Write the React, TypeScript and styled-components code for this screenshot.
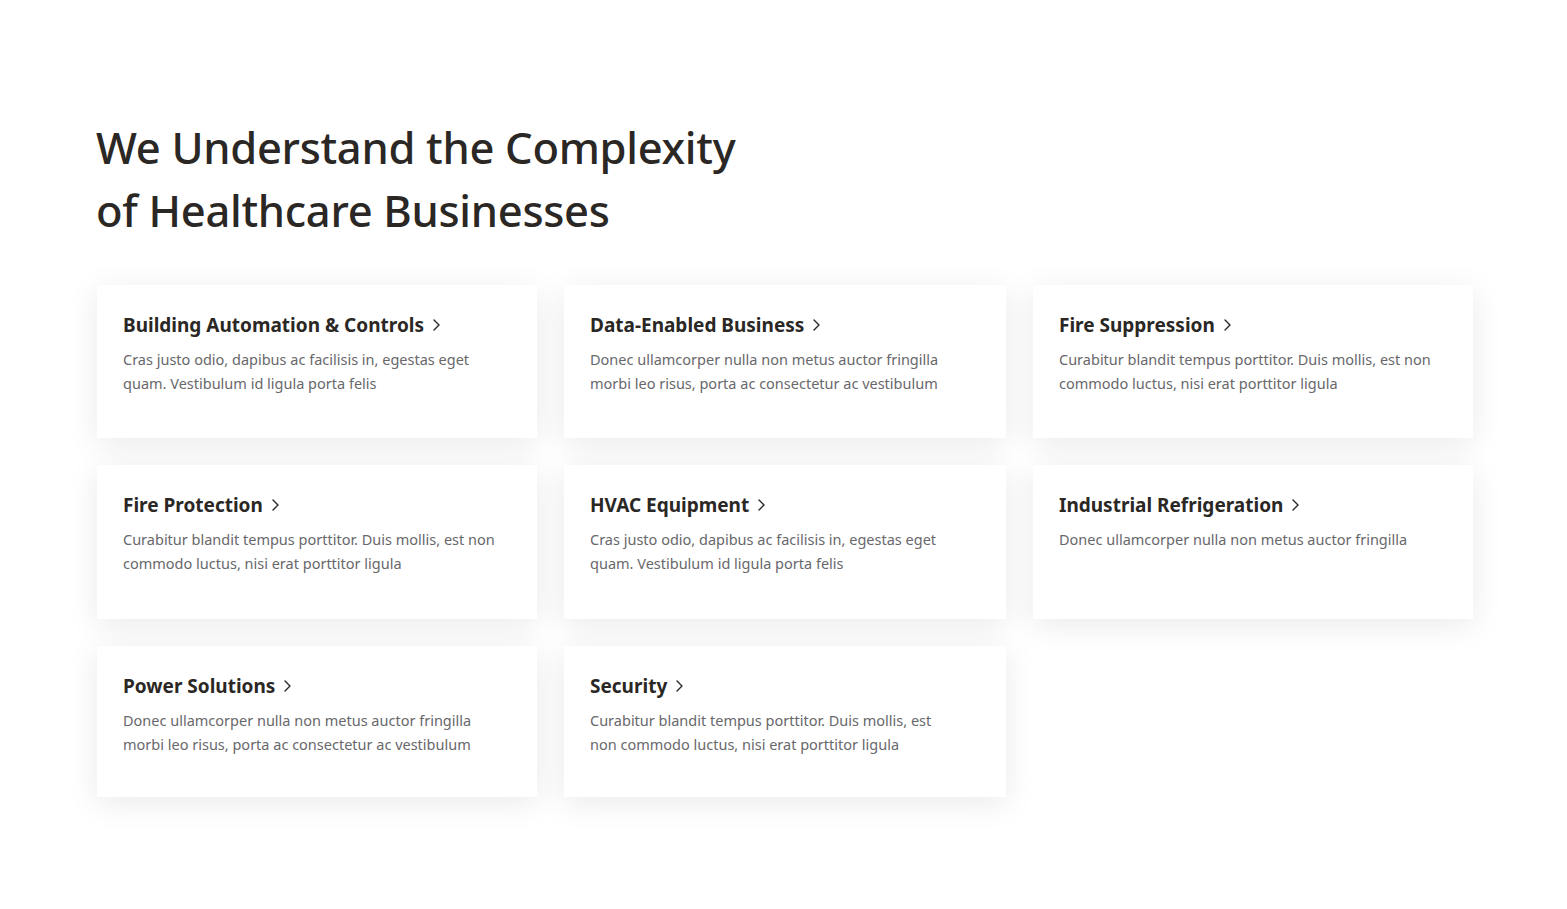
import React from "react";
import styled, { createGlobalStyle } from "styled-components";

const Global = createGlobalStyle`
  html, body { margin: 0; padding: 0; background: #ffffff; }
  body { font-family: "Noto Sans", "Open Sans", sans-serif; -webkit-font-smoothing: antialiased; }
`;

const Page = styled.main`
  padding: 116px 0 110px 96px;
  width: 1567px;
  box-sizing: border-box;
`;

const Heading = styled.h1`
  margin: 0 0 43px 0;
  font-family: "Noto Sans", sans-serif;
  font-weight: 500;
  font-size: 43.5px;
  line-height: 63px;
  letter-spacing: -0.3px;
  color: #2a2724;
`;

const Grid = styled.div`
  display: grid;
  grid-template-columns: 440px 442px 440px;
  column-gap: 27px;
  row-gap: 27px;
  padding-left: 1px;
`;

const Card = styled.a<{ $h: number }>`
  display: flex;
  flex-direction: column;
  height: ${(p) => p.$h}px;
  box-sizing: border-box;
  padding: 26px 26px 0 26px;
  background: #ffffff;
  box-shadow: 0 6px 30px rgba(0, 0, 0, 0.085);
  text-decoration: none;
  cursor: pointer;
`;

const Title = styled.h3`
  display: flex;
  align-items: center;
  gap: 9px;
  margin: 0 0 8px 0;
  font-family: "Noto Sans", sans-serif;
  font-weight: 700;
  font-size: 19px;
  line-height: 28px;
  color: #2a2724;
`;

const Desc = styled.p<{ $w: number }>`
  margin: 0;
  font-family: "Noto Sans", sans-serif;
  font-size: 14.5px;
  line-height: 24px;
  color: #68686b;
  max-width: ${(p) => p.$w}px;
`;

const Chevron = () => (
  <svg width="7" height="12" viewBox="0 0 7 12" fill="none">
    <path d="M1 1l5 5-5 5" stroke="#2a2724" strokeWidth="1.4" strokeLinecap="round" strokeLinejoin="round" />
  </svg>
);

const items = [
  { t: "Building Automation & Controls", d: "Cras justo odio, dapibus ac facilisis in, egestas eget quam. Vestibulum id ligula porta felis", h: 153, w: 380 },
  { t: "Data-Enabled Business", d: "Donec ullamcorper nulla non metus auctor fringilla morbi leo risus, porta ac consectetur ac vestibulum", h: 153, w: 380 },
  { t: "Fire Suppression", d: "Curabitur blandit tempus porttitor. Duis mollis, est non commodo luctus, nisi erat porttitor ligula", h: 153, w: 380 },
  { t: "Fire Protection", d: "Curabitur blandit tempus porttitor. Duis mollis, est non commodo luctus, nisi erat porttitor ligula", h: 154, w: 380 },
  { t: "HVAC Equipment", d: "Cras justo odio, dapibus ac facilisis in, egestas eget quam. Vestibulum id ligula porta felis", h: 154, w: 380 },
  { t: "Industrial Refrigeration", d: "Donec ullamcorper nulla non metus auctor fringilla", h: 154, w: 380 },
  { t: "Power Solutions", d: "Donec ullamcorper nulla non metus auctor fringilla morbi leo risus, porta ac consectetur ac vestibulum", h: 151, w: 380 },
  { t: "Security", d: "Curabitur blandit tempus porttitor. Duis mollis, est non commodo luctus, nisi erat porttitor ligula", h: 151, w: 355 },
];

export default function App() {
  return (
    <>
      <Global />
      <Page>
        <Heading>
          We Understand the Complexity
          <br />
          of Healthcare Businesses
        </Heading>
        <Grid>
          {items.map((it) => (
            <Card key={it.t} $h={it.h}>
              <Title>
                {it.t}
                <Chevron />
              </Title>
              <Desc $w={it.w}>{it.d}</Desc>
            </Card>
          ))}
        </Grid>
      </Page>
    </>
  );
}
